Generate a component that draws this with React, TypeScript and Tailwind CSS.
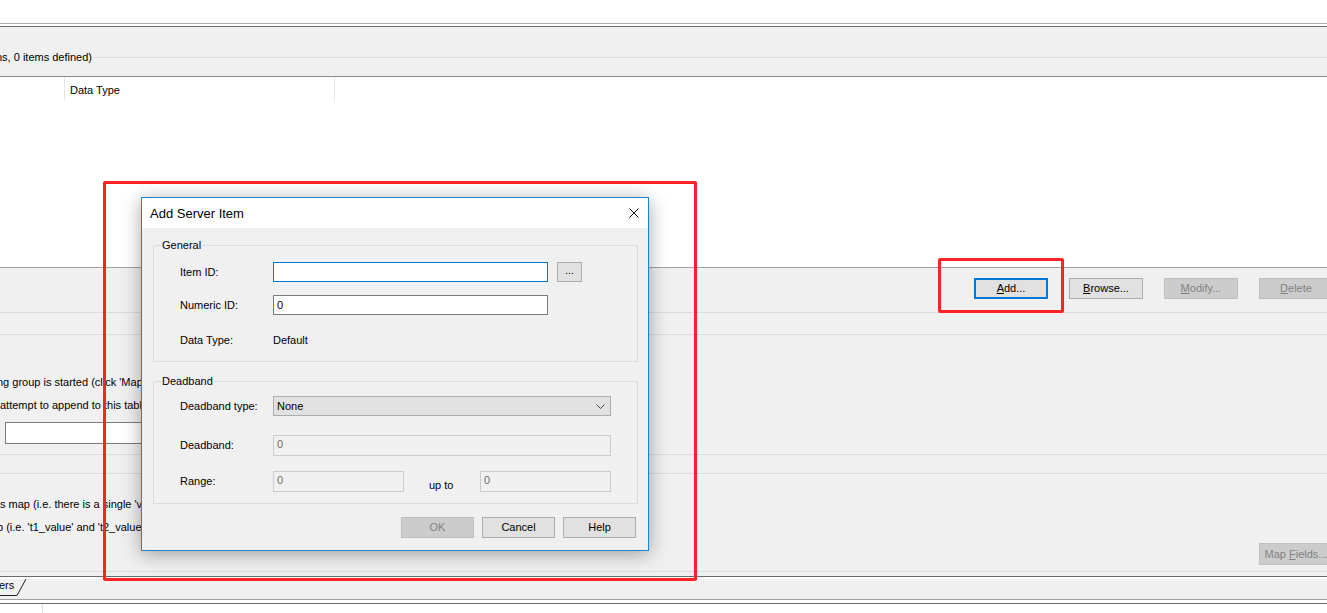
import type { ReactNode } from "react";

type BtnKind = "normal" | "focused" | "disabled";

const BTN: Record<BtnKind, string> = {
  normal: "border border-[#adadad] bg-[#e1e1e1] text-black",
  focused: "border-2 border-[#0078d7] bg-[#e1e1e1] text-black",
  disabled: "border border-[#bfbfbf] bg-[#cccccc] text-[#838383]",
};

function WinButton({
  children,
  kind = "normal",
  className = "",
}: {
  children: ReactNode;
  kind?: BtnKind;
  className?: string;
}) {
  return (
    <div
      className={`flex shrink-0 items-center justify-center whitespace-nowrap ${BTN[kind]} ${className}`}
    >
      {children}
    </div>
  );
}

function Row({
  label,
  children,
  className = "",
}: {
  label: string;
  children: ReactNode;
  className?: string;
}) {
  return (
    <div className={`flex items-center pl-[26px] ${className}`}>
      <span className="w-[93px] shrink-0">{label}</span>
      {children}
    </div>
  );
}

function DisabledBox({ className = "" }: { className?: string }) {
  return (
    <div
      className={`h-[21px] border border-[#cccccc] bg-[#f0f0f0] pl-[3px] pt-[2px] text-[#6d6d6d] ${className}`}
    >
      0
    </div>
  );
}

function AddServerItem() {
  return (
    <div className="absolute left-[141px] top-[197px] flex h-[354px] w-[508px] flex-col border border-[#1883d7] bg-[#f0f0f0] shadow-[0_3px_18px_rgba(0,0,0,0.35)]">
      <div className="flex h-[30px] shrink-0 items-center justify-between bg-white pl-[8px] pr-[9px]">
        <span className="text-[13px]">Add Server Item</span>
        <svg width="10" height="10" viewBox="0 0 10 10" fill="none">
          <path d="M0.5 0.5 L9.5 9.5 M9.5 0.5 L0.5 9.5" stroke="#111" strokeWidth="1" />
        </svg>
      </div>

      <fieldset className="ml-[11px] mt-[10px] w-[485px] border border-[#dcdcdc] px-0 pb-[11px] pt-[10px]">
        <legend className="ml-[7px] px-[1px] leading-[14px]">General</legend>
        <Row label="Item ID:" className="h-[20px]">
          <div className="h-[20px] w-[275px] border border-[#0078d7] bg-white" />
          <WinButton className="ml-[9px] h-[20px] w-[25px] pb-[3px]">...</WinButton>
        </Row>
        <Row label="Numeric ID:" className="mt-[13px] h-[20px]">
          <div className="flex h-[20px] w-[275px] items-center border border-[#7a7a7a] bg-white pl-[3px]">
            0
          </div>
        </Row>
        <Row label="Data Type:" className="mt-[15px] h-[20px]">
          <span>Default</span>
        </Row>
      </fieldset>

      <fieldset className="ml-[11px] mt-[12px] w-[485px] border border-[#dcdcdc] px-0 pb-[11px] pt-[8px]">
        <legend className="ml-[7px] px-[1px] leading-[14px]">Deadband</legend>
        <Row label="Deadband type:" className="h-[20px]">
          <div className="flex h-[20px] w-[338px] items-center justify-between border border-[#adadad] bg-[#e1e1e1] pl-[3px] pr-[5px]">
            <span>None</span>
            <svg width="9" height="5" viewBox="0 0 9 5" fill="none">
              <path d="M0.5 0.5 L4.5 4.5 L8.5 0.5" stroke="#444" strokeWidth="1" />
            </svg>
          </div>
        </Row>
        <Row label="Deadband:" className="mt-[19px] h-[21px]">
          <DisabledBox className="w-[338px]" />
        </Row>
        <Row label="Range:" className="mt-[15px] h-[21px]">
          <DisabledBox className="w-[131px]" />
          <span className="w-[76px] shrink-0 self-end pl-[25px]">up to</span>
          <DisabledBox className="w-[131px]" />
        </Row>
      </fieldset>

      <div className="mt-[13px] flex justify-end gap-[8px] pr-[12px]">
        <WinButton kind="disabled" className="h-[21px] w-[73px]">OK</WinButton>
        <WinButton className="h-[21px] w-[73px]">Cancel</WinButton>
        <WinButton className="h-[21px] w-[73px]">Help</WinButton>
      </div>
    </div>
  );
}

export default function App() {
  return (
    <div className="relative h-[613px] w-[1327px] overflow-hidden bg-white font-['Liberation_Sans',Arial,sans-serif] text-[11px] leading-[13px] text-black">
      <div className="h-[23px]" />
      <div className="h-px bg-[#acacac]" />
      <div className="h-[2px]" />
      <div className="h-px bg-[#696969]" />

      {/* group header */}
      <div className="h-[49px] bg-[#f0f0f0] pt-[24px]">
        <div className="flex h-[13px] items-center">
          <span className="-ml-[4px] whitespace-nowrap pr-[2px]">ns, 0 items defined)</span>
          <div className="h-px flex-1 bg-[#dcdcdc]" />
        </div>
      </div>
      <div className="h-px bg-[#8a8c94]" />

      {/* list */}
      <div className="h-[190px] bg-white">
        <div className="flex h-[24px]">
          <div className="w-[64px]" />
          <div className="flex w-[270px] items-center border-l border-[#e5e5e5] pl-[5px] pt-[2px]">Data Type</div>
          <div className="border-l border-[#e5e5e5]" />
        </div>
      </div>
      <div className="h-px bg-[#a0a0a0]" />

      {/* lower panel */}
      <div className="bg-[#f0f0f0] pt-[10px]">
        <div className="flex gap-[21px] pl-[974px]">
          <WinButton kind="focused" className="h-[21px] w-[74px]">
            <span><u>A</u>dd...</span>
          </WinButton>
          <WinButton className="h-[21px] w-[74px]">
            <span><u>B</u>rowse...</span>
          </WinButton>
          <WinButton kind="disabled" className="h-[21px] w-[74px]">
            <span><u>M</u>odify...</span>
          </WinButton>
          <WinButton kind="disabled" className="h-[21px] w-[74px]">
            <span><u>D</u>elete</span>
          </WinButton>
        </div>
        <div className="mt-[13px] h-px bg-[#dcdcdc]" />
        <div className="mt-[21px] h-px bg-[#dcdcdc]" />

        <div className="-ml-[3px] mt-[41px] whitespace-nowrap">ng group is started (click 'Map Fi</div>
        <div className="mt-[10px] whitespace-nowrap">attempt to append to this table</div>
        <div className="ml-[5px] mt-[10px] h-[22px] w-[180px] border border-[#7a7a7a] bg-white" />
        <div className="mt-[10px] h-px bg-[#dcdcdc]" />
        <div className="mt-[18px] h-px bg-[#dcdcdc]" />

        <div className="mt-[24px] whitespace-nowrap">s map (i.e. there is a single 'va</div>
        <div className="-ml-[3px] mt-[10px] whitespace-nowrap">p (i.e. 't1_value' and 't2_value</div>
        <div className="mt-[9px] flex pl-[1259px]">
          <WinButton kind="disabled" className="h-[22px] w-[74px]">
            <span>Map <u>F</u>ields...</span>
          </WinButton>
        </div>
        <div className="mt-[6px] h-px bg-[#dcdcdc]" />
        <div className="h-[4px]" />
      </div>
      <div className="h-px bg-[#696969]" />

      {/* tab strip */}
      <div className="h-[20px] bg-[#f0f0f0]">
        <div className="relative h-[17px] w-[27px]">
          <div className="-ml-[1px] mt-[2px]">ers</div>
          <svg className="absolute left-0 top-0" width="27" height="17" viewBox="0 0 27 17" fill="none">
            <path d="M0 16.5 H17 L26 0" stroke="#222" strokeWidth="1" />
          </svg>
        </div>
      </div>
      <div className="h-px bg-[#a0a0a0]" />
      <div className="h-[3px] bg-white" />
      <div className="h-px bg-[#696969]" />
      <div className="flex h-[12px]">
        <div className="w-[42px]" />
        <div className="border-l border-[#e0e0e0]" />
      </div>

      <AddServerItem />

      {/* annotations */}
      <div className="absolute left-[103px] top-[181px] h-[400px] w-[594px] rounded-[2px] border-[3px] border-[#ff2323]" />
      <div className="absolute left-[938px] top-[258px] h-[55px] w-[126px] rounded-[2px] border-[3px] border-[#ff2323]" />
    </div>
  );
}
